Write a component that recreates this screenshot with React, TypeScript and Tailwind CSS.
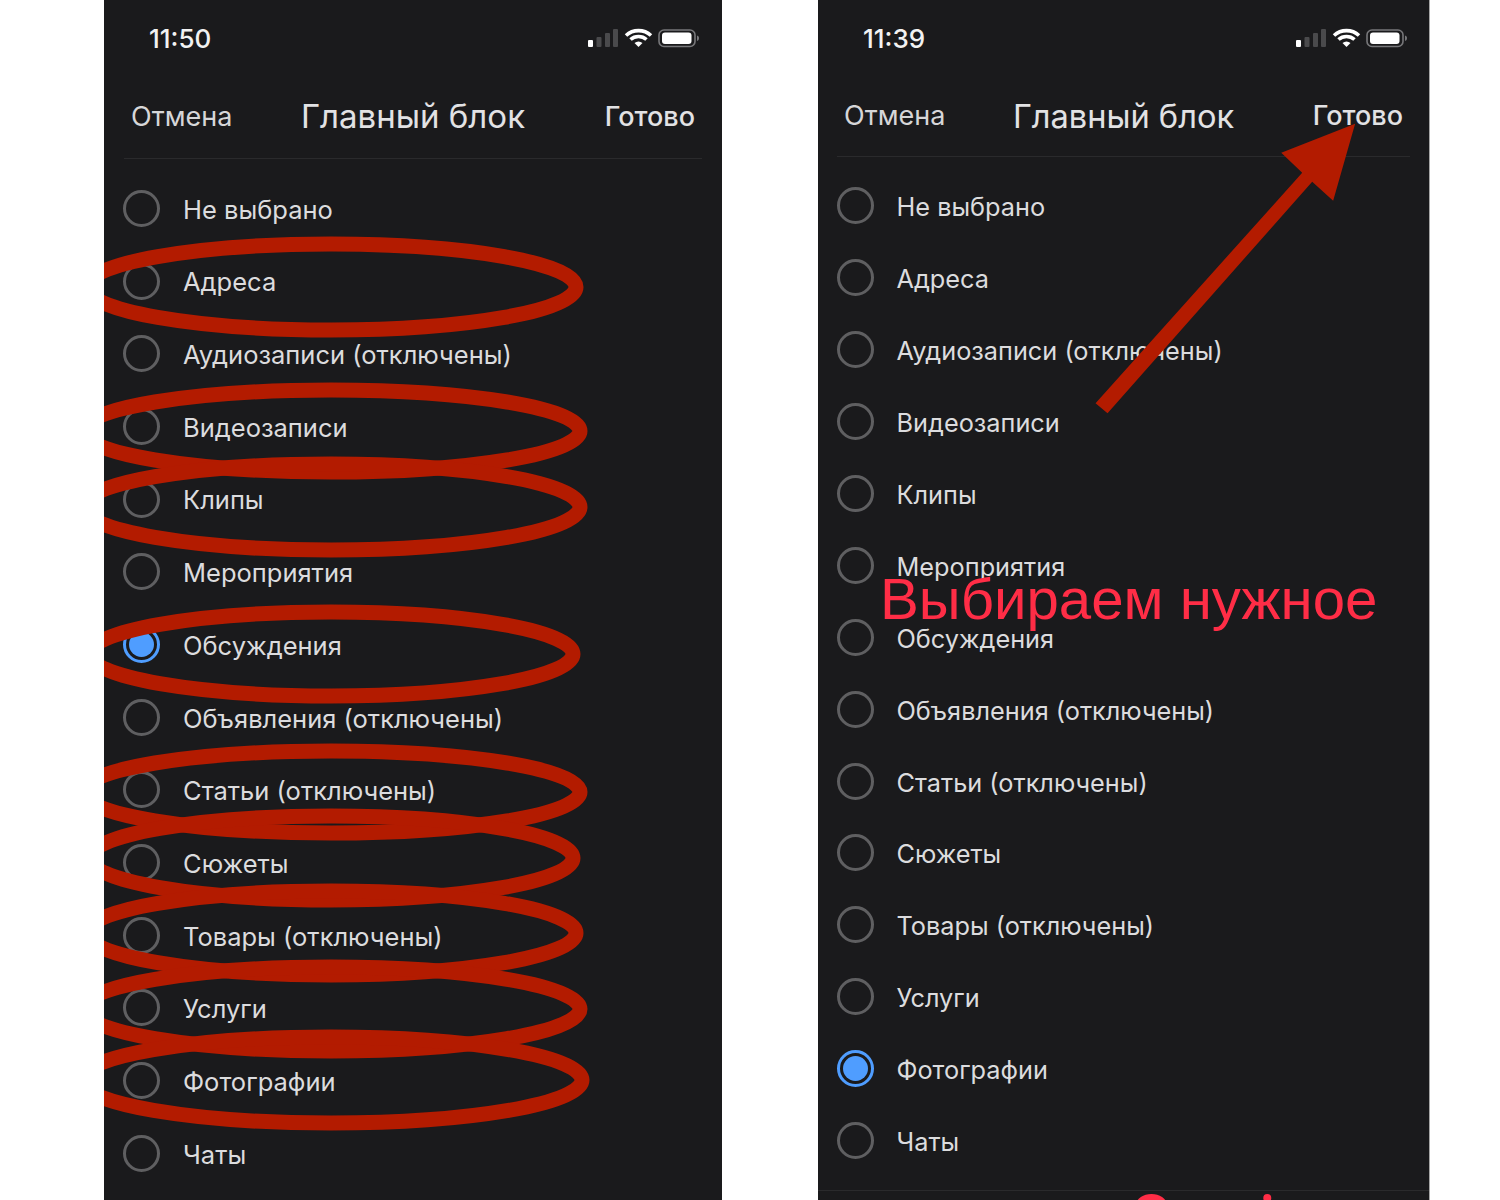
const options = [
    "Не выбрано",
    "Адреса",
    "Аудиозаписи (отключены)",
    "Видеозаписи",
    "Клипы",
    "Мероприятия",
    "Обсуждения",
    "Объявления (отключены)",
    "Статьи (отключены)",
    "Сюжеты",
    "Товары (отключены)",
    "Услуги",
    "Фотографии",
    "Чаты",
];

// ellipses drawn over the left phone, page coordinates
const marks = [
    { cy: 287, rx: 245, ry: 43 },
    { cy: 431, rx: 249, ry: 41 },
    { cy: 507, rx: 249, ry: 43 },
    { cy: 654, rx: 242, ry: 42 },
    { cy: 792, rx: 249, ry: 41 },
    { cy: 858, rx: 242, ry: 42 },
    { cy: 933, rx: 245, ry: 42 },
    { cy: 1009, rx: 249, ry: 42 },
    { cy: 1080, rx: 251, ry: 43 },
];

function StatusIcons() {
    return (
        <svg width="112" height="20" viewBox="0 0 112 20" className="shrink-0">
            <rect x="0" y="12" width="5" height="7" rx="1" fill="#ffffff" />
            <rect x="8.5" y="9" width="5" height="10" rx="1" fill="#4a4a4c" />
            <rect x="17" y="5" width="5" height="14" rx="1" fill="#4a4a4c" />
            <rect x="25" y="1" width="5" height="18" rx="1" fill="#4a4a4c" />
            <path d="M38 7.5 C45 1 56 1 63 7.5 M42.5 11.5 C47 7.5 54 7.5 58.5 11.5" fill="none" stroke="#ffffff" strokeWidth="3.6" />
            <path d="M46.5 15 C49 13 52 13 54.5 15 L50.5 19 Z" fill="#ffffff" />
            <rect x="71" y="2" width="36" height="16.5" rx="5" fill="none" stroke="#77777a" strokeWidth="1.6" />
            <rect x="74" y="4.5" width="29.5" height="11.5" rx="3" fill="#ffffff" />
            <path d="M109 7.5 C110.5 8 111 9 111 10.2 C111 11.4 110.5 12.5 109 13 Z" fill="#77777a" />
        </svg>
    );
}

function Radio({ checked }: { checked: boolean }) {
    if (checked) {
        return (
            <span className="w-[37px] h-[37px] shrink-0 rounded-full border-[3px] border-[#4f9dff] p-[3px] flex">
                <span className="w-full h-full rounded-full bg-[#4f9dff]" />
            </span>
        );
    }
    return <span className="w-[37px] h-[37px] shrink-0 rounded-full border-[3px] border-[#5f5f61]" />;
}

function Header(props: { time: string; status: string; nav: string; title: string }) {
    return (
        <>
            <div className={props.status}>
                <span className="text-[26px] font-medium text-[#f2f2f2]">{props.time}</span>
                <StatusIcons />
            </div>
            <div className={props.nav}>
                <span className="justify-self-start text-[27px] text-[#d6d6d8]">Отмена</span>
                <span className={props.title}>Главный блок</span>
                <span className="justify-self-end text-[27px] font-medium text-[#e2e2e4]">Готово</span>
            </div>
        </>
    );
}

function LeftPhone() {
    return (
        <div className="relative w-[618px] shrink-0 h-full overflow-hidden bg-[#1a1a1c]">
            <Header
                time="11:50"
                status="h-[76px] pl-[45px] pr-[22px] flex items-center justify-between"
                nav="h-[83px] mx-[20px] px-[7px] grid grid-cols-[1fr_auto_1fr] items-center border-b border-[#2a2a2c]"
                title="text-[33px] text-[#e2e2e4]"
            />
            <div className="px-[19px] pt-[13px] flex flex-col">
                {options.map((name) => (
                    <div key={name} className="h-[72.7px] flex items-center gap-[23px]">
                        <Radio checked={name === "Обсуждения"} />
                        <span className="text-[25.5px] text-[#dcdcde] pt-[3px]">{name}</span>
                    </div>
                ))}
            </div>
            <svg className="absolute inset-0 w-full h-full pointer-events-none" viewBox="104 0 618 1200">
                {marks.map((m) => (
                    <ellipse
                        key={m.cy}
                        cx={331}
                        cy={m.cy}
                        rx={m.rx}
                        ry={m.ry}
                        fill="none"
                        stroke="#b31b00"
                        strokeWidth="15"
                    />
                ))}
            </svg>
        </div>
    );
}

function RightPhone() {
    return (
        <div className="relative w-[612px] shrink-0 h-full overflow-hidden bg-[#1a1a1c] border-r border-[#a6a6a6]">
            <Header
                time="11:39"
                status="h-[76px] pl-[45px] pr-[21px] flex items-center justify-between"
                nav="h-[81px] mx-[19px] px-[7px] grid grid-cols-[1fr_auto_1fr] items-center border-b border-[#2a2a2c]"
                title="text-[32.6px] text-[#e2e2e4]"
            />
            <div className="px-[19px] pt-[13px] flex flex-col">
                {options.map((name) => (
                    <div key={name} className="h-[71.9px] flex items-center gap-[22.5px]">
                        <Radio checked={name === "Фотографии"} />
                        <span className="text-[25.3px] text-[#dcdcde] pt-[3px]">{name}</span>
                    </div>
                ))}
            </div>
            <div className="mt-[14px] border-t border-[#2a2a2c]" />

            {/* Annotations */}
            <svg className="absolute inset-0 w-full h-full pointer-events-none" viewBox="818 0 612 1200">
                <path d="M1356 123 L1334 200 L1313 181 L1108 413 L1096 403 L1303 172 L1282 152 Z" fill="#b31b00" />
                <ellipse cx="1152" cy="1205" rx="15" ry="10" fill="#ff2d46" />
                <circle cx="1268" cy="1199" r="4" fill="#ff2d46" />
            </svg>
            <span className="absolute left-[62px] top-[562px] font-['Liberation_Sans',sans-serif] text-[58.2px] leading-[74px] whitespace-nowrap text-[#ff2d46]">
                Выбираем нужное
            </span>
        </div>
    );
}

export default function App() {
    return (
        <div className="w-[1500px] h-[1200px] overflow-hidden bg-white pl-[104px] flex gap-[96px] font-['Inter',sans-serif]">
            <LeftPhone />
            <RightPhone />
        </div>
    );
}
